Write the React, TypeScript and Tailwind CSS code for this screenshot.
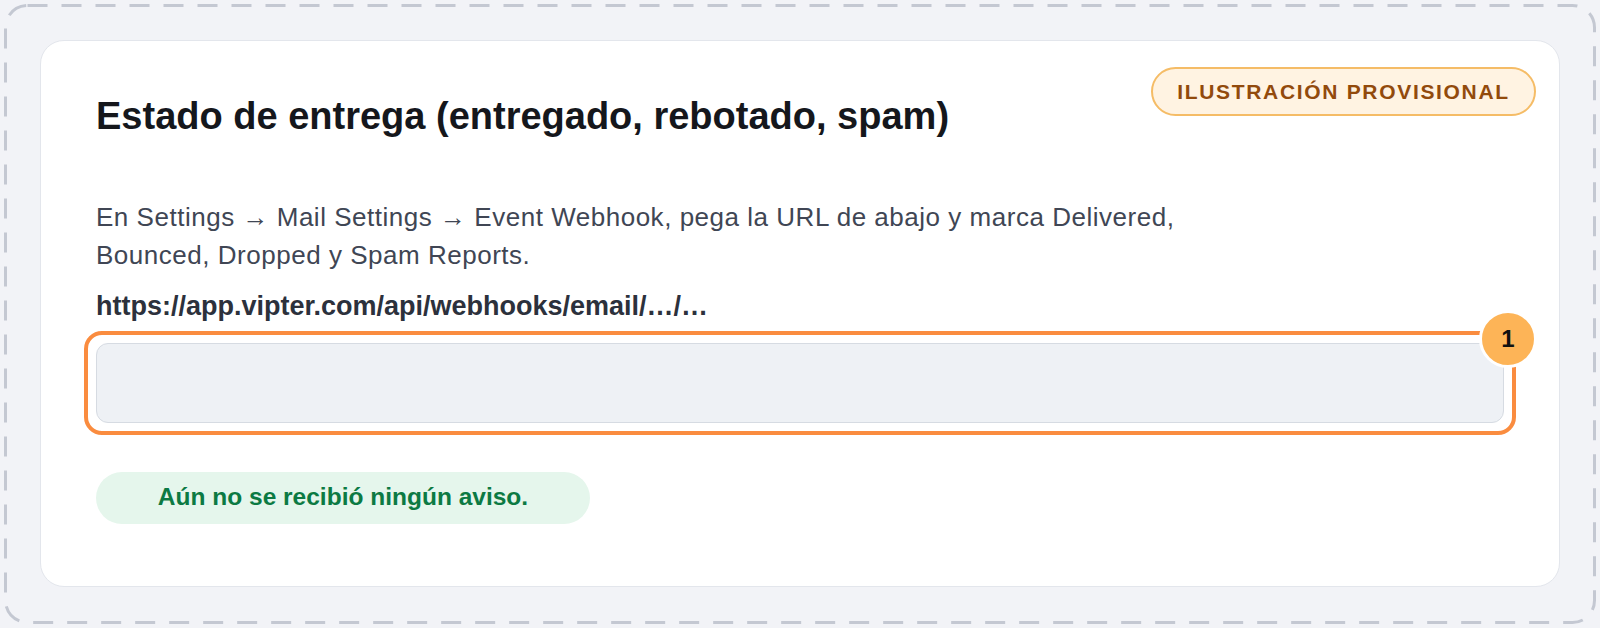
export default function App() {
  return (
    <div className="relative h-[628px] w-full bg-[#f2f3f7] p-10 font-['Liberation_Sans',Arial,sans-serif]">
      {/* dashed frame */}
      <svg className="pointer-events-none absolute inset-0 h-full w-full" aria-hidden>
        <rect
          x="5.5"
          y="5.5"
          rx="22"
          ry="22"
          className="h-[calc(100%-11px)] w-[calc(100%-11px)]"
          fill="none"
          stroke="#c4c8d2"
          strokeWidth="3"
          strokeDasharray="20 14"
        />
      </svg>

      <div className="relative rounded-[24px] border border-[#e3e6ec] bg-white px-[55px] pt-[52px] pb-[62px]">
        <span className="absolute top-[26px] right-[23px] flex h-[49px] w-[385px] items-center justify-center rounded-full border-2 border-[#f5bc66] bg-[#fff3e2] text-[21px] font-bold tracking-[0.08em] text-[#924a0c]">
          ILUSTRACIÓN PROVISIONAL
        </span>

        <h2 className="text-[38px] leading-[46px] font-bold text-[#15171c]">
          Estado de entrega (entregado, rebotado, spam)
        </h2>

        <p className="mt-[59px] max-w-[1110px] text-[26px] leading-[38.4px] tracking-[0.02em] text-[#404654]">
          En Settings → Mail Settings → Event Webhook, pega la URL de abajo y marca Delivered, Bounced, Dropped y Spam
          Reports.
        </p>

        <div className="mt-3 text-[27px] leading-[39px] font-semibold text-[#2c313c]">
          https://app.vipter.com/api/webhooks/email/…/…
        </div>

        <div className="relative mt-[17px]">
          <div className="h-[80px] rounded-[12px] border-[1.5px] border-[#d6dbe2] bg-[#eef1f5]" />
          <div className="pointer-events-none absolute -inset-3 rounded-[18px] border-4 border-[#fa8c3f]">
            <span className="absolute -top-[25px] -right-[25px] flex h-[58px] w-[58px] items-center justify-center rounded-full border-[3px] border-white bg-[#fdb457] text-[24px] font-bold text-[#111]">
              1
            </span>
          </div>
        </div>

        <div className="mt-[49px] flex h-[52px] w-[494px] items-center justify-center rounded-full bg-[#e5f6ec] text-[24.5px] font-bold text-[#0c7a43]">
          Aún no se recibió ningún aviso.
        </div>
      </div>
    </div>
  );
}
